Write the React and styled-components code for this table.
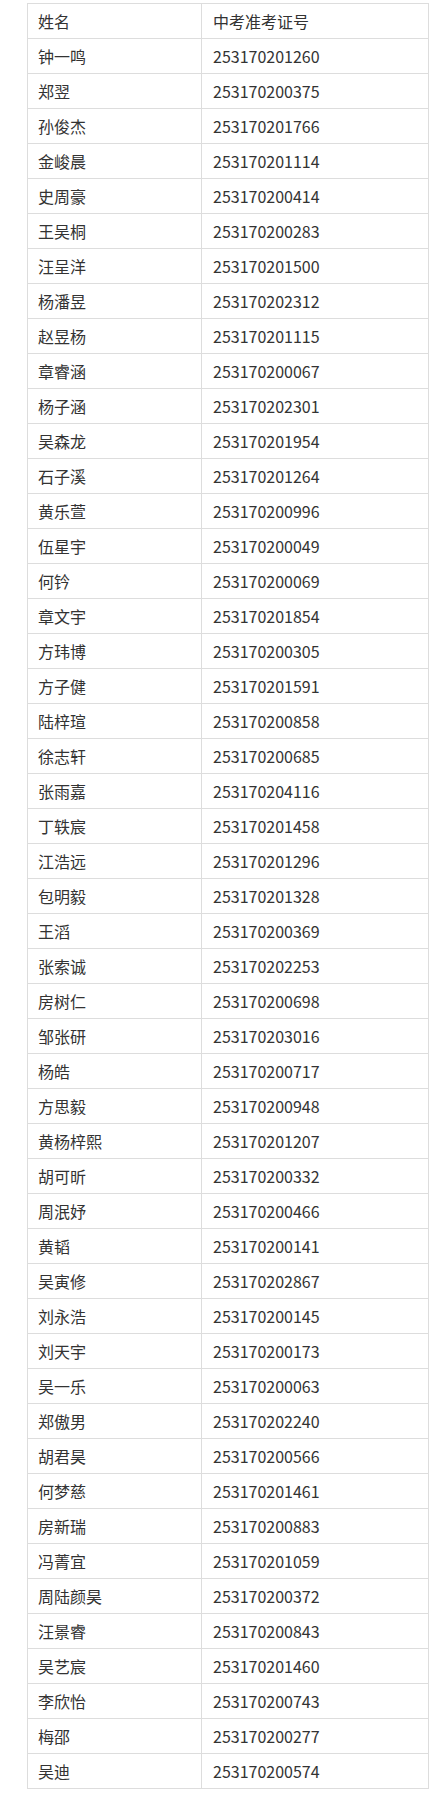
import React from "react";
import styled, { createGlobalStyle } from "styled-components";

const rows = [
  ["钟一鸣", "253170201260"],
  ["郑翌", "253170200375"],
  ["孙俊杰", "253170201766"],
  ["金峻晨", "253170201114"],
  ["史周豪", "253170200414"],
  ["王吴桐", "253170200283"],
  ["汪呈洋", "253170201500"],
  ["杨潘昱", "253170202312"],
  ["赵昱杨", "253170201115"],
  ["章睿涵", "253170200067"],
  ["杨子涵", "253170202301"],
  ["吴森龙", "253170201954"],
  ["石子溪", "253170201264"],
  ["黄乐萱", "253170200996"],
  ["伍星宇", "253170200049"],
  ["何钤", "253170200069"],
  ["章文宇", "253170201854"],
  ["方玮博", "253170200305"],
  ["方子健", "253170201591"],
  ["陆梓瑄", "253170200858"],
  ["徐志轩", "253170200685"],
  ["张雨嘉", "253170204116"],
  ["丁轶宸", "253170201458"],
  ["江浩远", "253170201296"],
  ["包明毅", "253170201328"],
  ["王滔", "253170200369"],
  ["张索诚", "253170202253"],
  ["房树仁", "253170200698"],
  ["邹张研", "253170203016"],
  ["杨皓", "253170200717"],
  ["方思毅", "253170200948"],
  ["黄杨梓熙", "253170201207"],
  ["胡可昕", "253170200332"],
  ["周泯妤", "253170200466"],
  ["黄韬", "253170200141"],
  ["吴寅修", "253170202867"],
  ["刘永浩", "253170200145"],
  ["刘天宇", "253170200173"],
  ["吴一乐", "253170200063"],
  ["郑傲男", "253170202240"],
  ["胡君昊", "253170200566"],
  ["何梦慈", "253170201461"],
  ["房新瑞", "253170200883"],
  ["冯菁宜", "253170201059"],
  ["周陆颜昊", "253170200372"],
  ["汪景睿", "253170200843"],
  ["吴艺宸", "253170201460"],
  ["李欣怡", "253170200743"],
  ["梅邵", "253170200277"],
  ["吴迪", "253170200574"],
];

const GlobalStyle = createGlobalStyle`
  html, body {
    margin: 0;
    padding: 0;
    background: #ffffff;
  }
  body {
    font-family: "Noto Sans CJK SC", "Noto Sans", sans-serif;
    color: #333333;
  }
`;

const Page = styled.div`
  padding: 3px 19px 7px 27px;
`;

const Table = styled.table`
  width: 402px;
  border-collapse: collapse;
  table-layout: fixed;
  font-size: 16px;
`;

const Row = styled.tr`
  height: 35px;
`;

const Cell = styled.td`
  border: 1px solid #dddddd;
  padding: 0 10px 0 ${(p) => (p.$first ? "10px" : "11px")};
  vertical-align: middle;
  line-height: 20px;
  color: #333333;
  white-space: nowrap;
  width: ${(p) => (p.$first ? "174px" : "auto")};
  box-sizing: border-box;
`;

export default function App() {
  return (
    <>
      <GlobalStyle />
      <Page>
        <Table>
          <tbody>
            <Row>
              <Cell $first>姓名</Cell>
              <Cell>中考准考证号</Cell>
            </Row>
            {rows.map(([name, id]) => (
              <Row key={id}>
                <Cell $first>{name}</Cell>
                <Cell>{id}</Cell>
              </Row>
            ))}
          </tbody>
        </Table>
      </Page>
    </>
  );
}
